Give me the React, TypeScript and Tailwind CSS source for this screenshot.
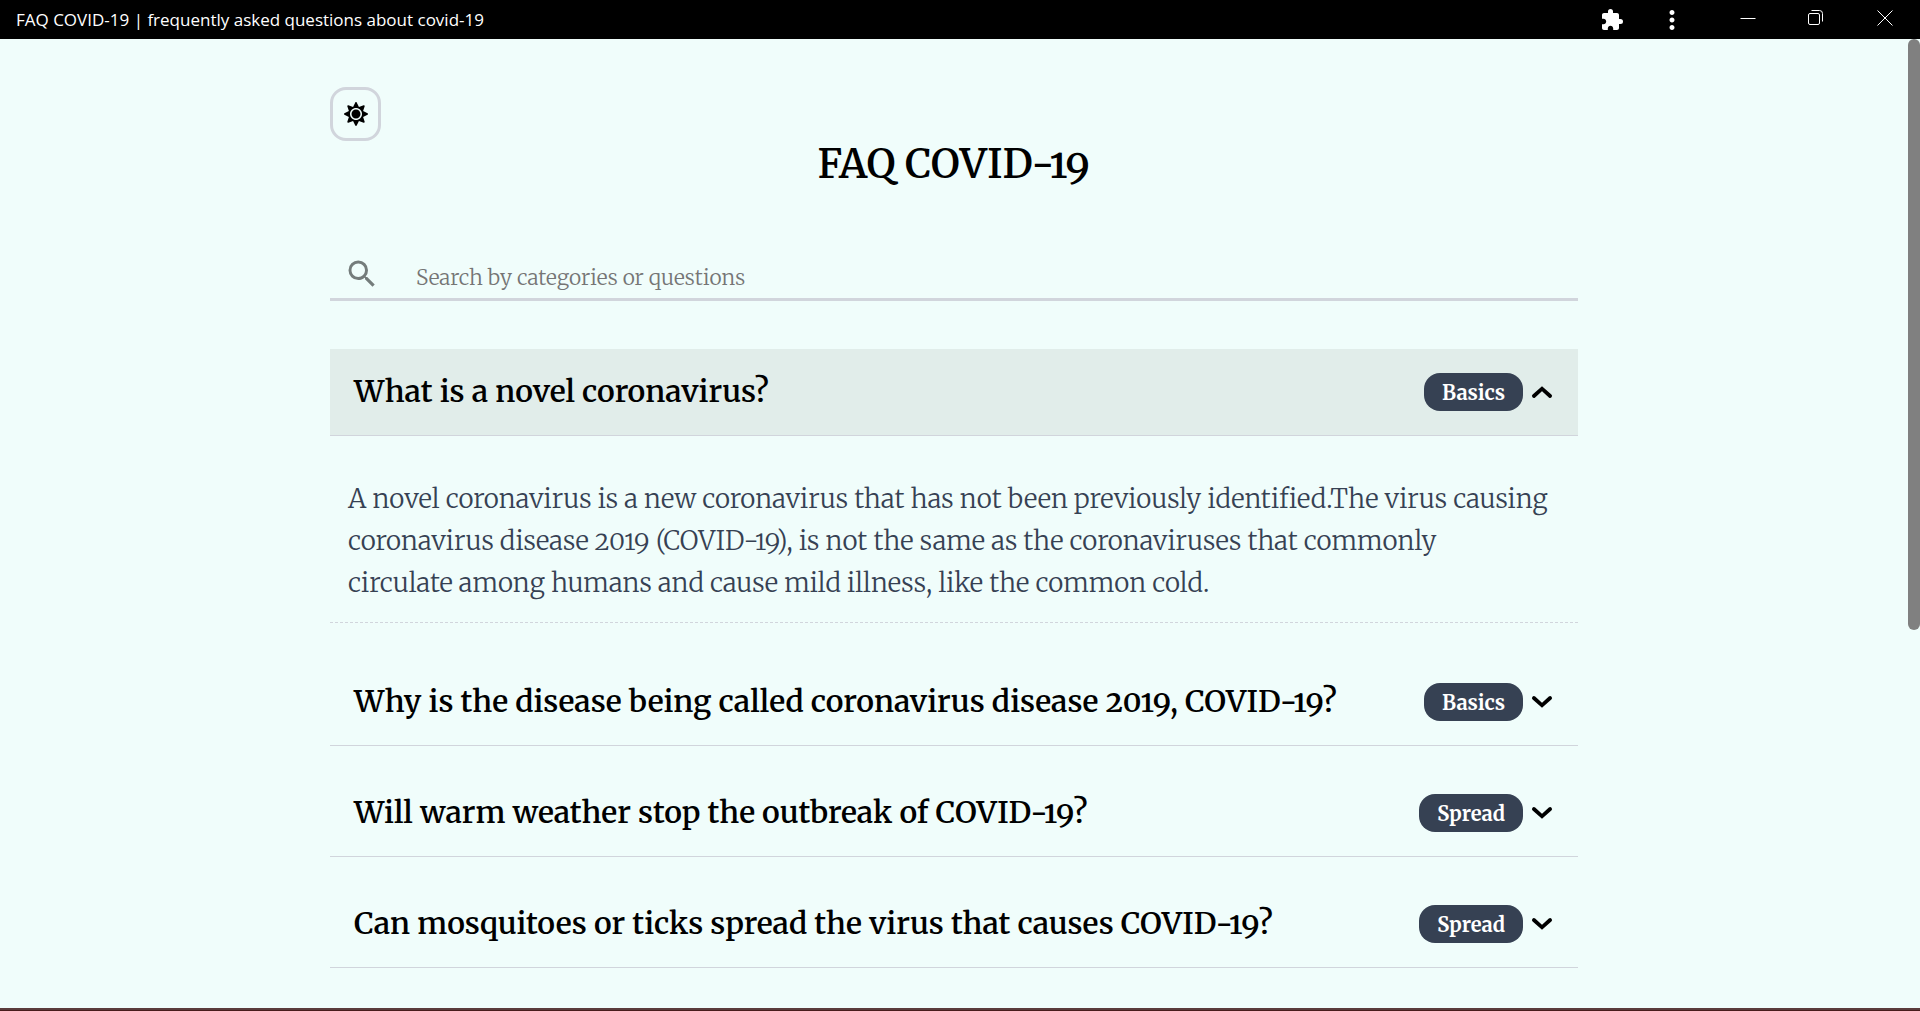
import React, { useState } from "react";
import { FaSun } from "react-icons/fa";
import { MdExtension, MdMoreVert, MdSearch } from "react-icons/md";

type Faq = { question: string; category: string; answer: string };

const faqs: Faq[] = [
  {
    question: "What is a novel coronavirus?",
    category: "Basics",
    answer:
      "A novel coronavirus is a new coronavirus that has not been previously identified.The virus causing coronavirus disease 2019 (COVID-19), is not the same as the coronaviruses that commonly\ncirculate among humans and cause mild illness, like the common cold.",
  },
  {
    question: "Why is the disease being called coronavirus disease 2019, COVID-19?",
    category: "Basics",
    answer: "",
  },
  { question: "Will warm weather stop the outbreak of COVID-19?", category: "Spread", answer: "" },
  {
    question: "Can mosquitoes or ticks spread the virus that causes COVID-19?",
    category: "Spread",
    answer: "",
  },
];

function TitleBar() {
  return (
    <header className="flex h-[39px] shrink-0 items-center bg-black pl-4 text-white lining-nums">
      <span className="flex-1 font-['Open_Sans','Noto_Sans',sans-serif] text-[17px] leading-6">
        FAQ COVID-19 | frequently asked questions about covid-19
      </span>
      <div className="flex h-full items-center">
        <button aria-label="Extensions" className="flex h-full w-[60px] items-center justify-center">
          <MdExtension className="size-6" />
        </button>
        <button aria-label="More" className="flex h-full w-[60px] items-center justify-center">
          <MdMoreVert className="size-[30px]" />
        </button>
        <button aria-label="Minimize" className="flex h-full w-[92px] items-center justify-center pb-1">
          <svg width="16" height="16" viewBox="0 0 16 16" stroke="currentColor" fill="none">
            <path d="M0.5 8.5h15" />
          </svg>
        </button>
        <button aria-label="Restore" className="flex h-full w-11 items-center justify-center pb-1">
          <svg width="16" height="16" viewBox="0 0 16 16" stroke="currentColor" fill="none">
            <rect x="0.5" y="3.5" width="11" height="11" rx="1.5" />
            <path d="M3.5 0.5h8a3 3 0 0 1 3 3v8" />
          </svg>
        </button>
        <button aria-label="Close" className="flex h-full w-[82px] items-center justify-center pb-1 pl-3">
          <svg width="16" height="16" viewBox="0 0 16 16" stroke="currentColor" fill="none">
            <path d="M0.5 0.5l15 15M15.5 0.5l-15 15" />
          </svg>
        </button>
      </div>
    </header>
  );
}

function Chevron({ up }: { up: boolean }) {
  return (
    <svg
      className="size-6 shrink-0"
      viewBox="0 0 24 24"
      fill="none"
      stroke="currentColor"
      strokeWidth="3.8"
      strokeLinecap="round"
      aria-hidden="true"
    >
      <path d={up ? "M3.9 16L12 8.7L20.1 16" : "M3.9 8L12 15.3L20.1 8"} />
    </svg>
  );
}

function FaqItem({ faq, open, onToggle }: { faq: Faq; open: boolean; onToggle: () => void }) {
  return (
    <article>
      <h2>
        <button
          onClick={onToggle}
          aria-expanded={open}
          className={
            open
              ? "flex w-full items-center gap-[7px] border-b border-gray-300 bg-[#e1edea] p-6 text-left text-black"
              : "flex w-full items-center gap-[7px] border-b border-gray-300 p-6 text-left text-black"
          }
        >
          <span className="flex-1 pb-0.5 text-3xl leading-9 font-semibold">{faq.question}</span>
          <span className="rounded-2xl bg-gray-700 px-[18px] pt-2 pb-1.5 text-xl leading-6 font-bold text-white">
            {faq.category}
          </span>
          <Chevron up={open} />
        </button>
      </h2>
      {open && faq.answer && (
        <p className="mb-3 border-b border-dashed border-gray-300 px-[18px] pt-[42px] pb-[18px] text-[26px] leading-[42px] font-light whitespace-pre-line text-gray-700">
          {faq.answer}
        </p>
      )}
    </article>
  );
}

export default function App() {
  const [openIndex, setOpenIndex] = useState(0);
  return (
    <div className="flex h-screen flex-col overflow-hidden bg-[#f0fdfb] font-['Merriweather','Noto_Serif',serif] oldstyle-nums">
      <TitleBar />
      <div className="flex min-h-0 flex-1">
        <main className="flex-1 overflow-hidden">
          <div className="mx-auto max-w-[1248px] pt-12">
            <button
              aria-label="Toggle theme"
              className="flex h-[54px] w-[51px] items-center justify-center rounded-2xl border-3 border-gray-300 text-black"
            >
              <FaSun className="size-6" />
            </button>
            <h1 className="text-center text-[40px] leading-[46px] font-semibold">FAQ COVID-19</h1>
            <label className="mt-[62px] flex h-[52px] items-center border-b-3 border-gray-300">
              <MdSearch className="ml-[14px] size-9 shrink-0 text-[#747c7b]" />
              <input
                type="search"
                aria-label="Search"
                placeholder="Search by categories or questions"
                className="ml-9 flex-1 bg-transparent pt-2 text-[21px] font-light outline-none placeholder:text-[#757575]"
              />
            </label>
            <div className="mt-12 flex flex-col gap-6">
              {faqs.map((faq, i) => (
                <FaqItem
                  key={faq.question}
                  faq={faq}
                  open={openIndex === i}
                  onToggle={() => setOpenIndex(openIndex === i ? -1 : i)}
                />
              ))}
            </div>
          </div>
        </main>
        <div className="w-3 shrink-0" aria-hidden="true">
          <div className="h-[61%] rounded-full bg-[#808080]" />
        </div>
      </div>
      <div className="h-[3px] shrink-0 border-t-2 border-[#5a3c3c] bg-[#481c1c]" />
    </div>
  );
}
